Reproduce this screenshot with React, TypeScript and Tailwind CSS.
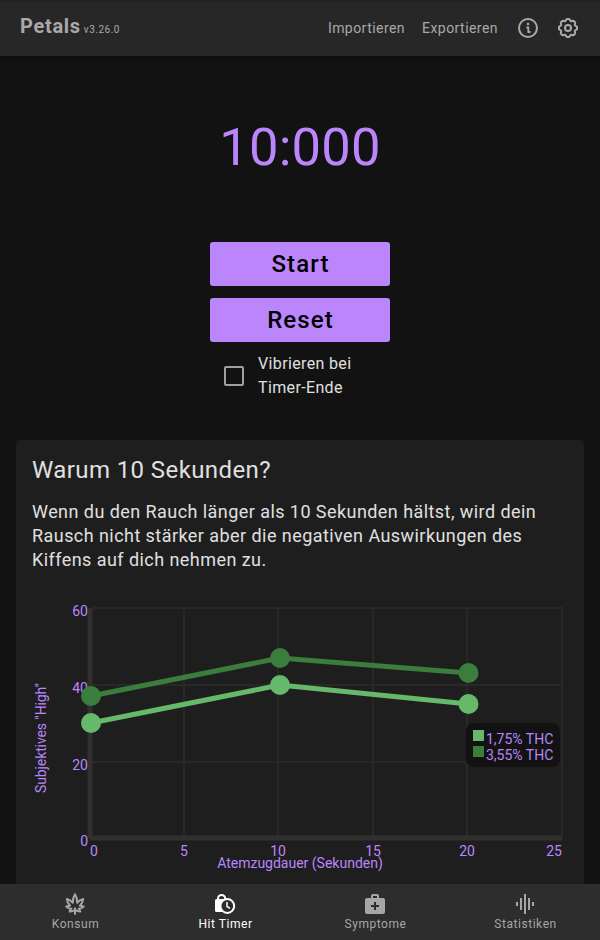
import React from "react";
import { MdGraphicEq, MdMedicalServices } from "react-icons/md";

function InfoIcon() {
  return (
    <svg className="size-6" viewBox="0 0 24 24" fill="none" stroke="currentColor" strokeWidth="2">
      <circle cx="12" cy="12" r="9" />
      <path d="M10.300 11.500h2V16M11.500 16h3" strokeWidth="1.800" />
      <circle cx="12" cy="8" r="1.300" fill="currentColor" stroke="none" />
    </svg>
  );
}

function GearIcon() {
  return (
    <svg className="size-6" viewBox="0 0 24 24" fill="none" stroke="currentColor" strokeWidth="2" strokeLinejoin="round">
      <circle cx="12" cy="12" r="3" />
      <path d="M10.800 3h2.400l1.600 2.200 2.700-.4 1.700 1.700-.4 2.700L21 10.800v2.400l-2.200 1.600.4 2.700-1.700 1.700-2.700-.4-1.600 2.200h-2.400l-1.600-2.200-2.700.4-1.700-1.700.4-2.700L3 13.200v-2.400l2.200-1.600-.4-2.700 1.700-1.700 2.700.4z" />
    </svg>
  );
}

function LeafIcon() {
  return (
    <svg className="size-6" viewBox="0 0 24 24" fill="none" stroke="currentColor" strokeWidth="2" strokeLinejoin="round">
      <path d="M12 2.200c-1.600 2.400-2.400 5-2.200 8.600C8.300 8.800 6.300 7.500 3.800 7c.3 2.800 1.300 4.900 3.300 6.700-1.300-.1-2.600.2-3.900.9 1.500 1.500 3.200 2.200 5.300 2.200-1 .7-1.600 1.600-1.900 2.700 2.100.1 3.900-.4 5.400-1.800 1.500 1.400 3.300 1.900 5.400 1.800-.3-1.100-.9-2-1.900-2.700 2.100 0 3.800-.7 5.300-2.200-1.300-.7-2.600-1-3.900-.9 2-1.800 3-3.900 3.300-6.700-2.500.5-4.500 1.800-6 3.800.2-3.600-.6-6.200-2.200-8.600z" />
      <path d="M12 15.500v7.300" />
    </svg>
  );
}

function LockClockIcon() {
  return (
    <svg className="size-6" viewBox="0 0 24 24" fill="none">
      <path d="M5 8V6.500a3.600 3.600 0 0 1 7.200 0V8" stroke="currentColor" strokeWidth="2" />
      <path d="M3.500 7H12v13H3.500A1.500 1.500 0 0 1 2 18.500v-10A1.500 1.500 0 0 1 3.500 7z" fill="currentColor" />
      <circle cx="14.300" cy="14" r="6.900" fill="#2d2d2d" stroke="currentColor" strokeWidth="2" />
      <path d="M14 10v4.500l3 1.800" stroke="currentColor" strokeWidth="1.500" />
    </svg>
  );
}

const points = {
  strong: [[91, 696], [280, 658], [468.500, 673]],
  mild: [[91, 723], [280, 685], [468.500, 704]],
};

function Series({ data, color }: { data: number[][]; color: string }) {
  return (
    <g fill={color} stroke={color}>
      <polyline points={data.map((p) => p.join(",")).join(" ")} fill="none" strokeWidth="5" />
      {data.map(([x, y]) => (
        <circle key={x} cx={x} cy={y} r="10" stroke="none" />
      ))}
    </g>
  );
}

function Chart() {
  return (
    <svg className="mt-5 block h-[292px] w-[536px]" viewBox="32 592 536 292">
      <g stroke="#282828" strokeWidth="2">
        <path d="M92 608H563M92 685H563M92 762H563" />
        <path d="M184 608V836M278 608V836M373 608V836M467 608V836M562 608V838" />
      </g>
      <path d="M90 838H562" stroke="#303030" strokeWidth="5" />
      <path d="M90 608V838" stroke="#303030" strokeWidth="5" />
      <g fill="#bb86fc" fontSize="14">
        <g textAnchor="end">
          <text x="88" y="616">60</text>
          <text x="88" y="693">40</text>
          <text x="88" y="770">20</text>
          <text x="88" y="846">0</text>
        </g>
        <g textAnchor="middle">
          <text x="94" y="856">0</text>
          <text x="184" y="856">5</text>
          <text x="278" y="856">10</text>
          <text x="373" y="856">15</text>
          <text x="467" y="856">20</text>
          <text x="554" y="856">25</text>
          <text x="300" y="868">Atemzugdauer (Sekunden)</text>
          <text transform="translate(46 738) rotate(-90)" textLength="110">Subjektives "High"</text>
        </g>
      </g>
      <Series data={points.strong} color="#3a7d3c" />
      <Series data={points.mild} color="#66b96a" />
      <rect x="466" y="723" width="94" height="44" rx="8" fill="#121212" />
      <rect x="473" y="730" width="11" height="11" fill="#66b96a" />
      <rect x="473" y="746" width="11" height="11" fill="#3a7d3c" />
      <g fill="#bb86fc" fontSize="14">
        <text x="486" y="744">1,75% THC</text>
        <text x="486" y="760">3,55% THC</text>
      </g>
    </svg>
  );
}

function Tab({ label, active, children }: { label: string; active?: boolean; children: React.ReactNode }) {
  return (
    <div className={`flex flex-1 flex-col items-center pt-2 ${active ? "text-white" : "text-[#a6a6a6]"}`}>
      {children}
      <span className="pl-px text-[12px] leading-4 tracking-[0.55px]">{label}</span>
    </div>
  );
}

export default function App() {
  return (
    <div className="flex h-[940px] w-[600px] flex-col overflow-hidden bg-[#121212] font-[Roboto,sans-serif] text-[#e0e0e0]">
      <header className="flex h-14 shrink-0 items-center border-t-2 border-[#222222] bg-[#272727] pr-5 pb-0.5 pl-5 text-[#a9a9a9] shadow-[0_1px_3px_#0c0c0c]">
        <div className="flex items-baseline gap-[3px] pb-1">
          <h1 className="text-[20px] leading-6 font-bold tracking-[0.7px]">Petals</h1>
          <span className="text-[10px] tracking-[0.5px]">v3.26.0</span>
        </div>
        <nav className="ml-auto flex items-center text-[14px] tracking-[0.45px]">
          <span className="mr-[17px]">Importieren</span>
          <span className="mr-[18px]">Exportieren</span>
          <span className="mr-4"><InfoIcon /></span>
          <GearIcon />
        </nav>
      </header>
      <main className="flex min-h-0 flex-1 flex-col items-center overflow-hidden">
        <div className="mt-[58px] h-16 pt-px text-[52.5px] leading-16 tracking-[0.2px] text-[#bb86fc]">10:000</div>
        <div className="mt-16 flex w-[180px] flex-col gap-3">
          <button className="h-11 rounded-[3px] bg-[#bb86fc] pl-px text-[24px] leading-none font-medium tracking-[1.1px] text-black">Start</button>
          <button className="h-11 rounded-[3px] bg-[#bb86fc] pl-px text-[24px] leading-none font-medium tracking-[1.1px] text-black">Reset</button>
        </div>
        <label className="mt-2.5 flex w-[152px] items-center gap-3.5">
          <span className="size-5 shrink-0 rounded-[2px] border-2 border-[#a0a0a0]" />
          <span className="text-[16px] leading-6 tracking-[0.36px]">Vibrieren bei<br />Timer-Ende</span>
        </label>
        <section className="mt-10 h-[460px] w-[568px] shrink-0 rounded-[4px] bg-[#1e1e1e] px-4 pt-3.5">
          <h2 className="text-[24px] leading-8 tracking-[0.4px]">Warum 10 Sekunden?</h2>
          <p className="mt-3.5 text-[18px] leading-6 tracking-[0.44px]">
            Wenn du den Rauch länger als 10 Sekunden hältst, wird dein<br />
            Rausch nicht stärker aber die negativen Auswirkungen des<br />
            Kiffens auf dich nehmen zu.
          </p>
          <Chart />
        </section>
      </main>
      <footer className="flex h-14 shrink-0 bg-[#2d2d2d]">
        <Tab label="Konsum"><LeafIcon /></Tab>
        <Tab label="Hit Timer" active><LockClockIcon /></Tab>
        <Tab label="Symptome"><MdMedicalServices className="size-6" /></Tab>
        <Tab label="Statistiken"><MdGraphicEq className="size-6" /></Tab>
      </footer>
    </div>
  );
}
